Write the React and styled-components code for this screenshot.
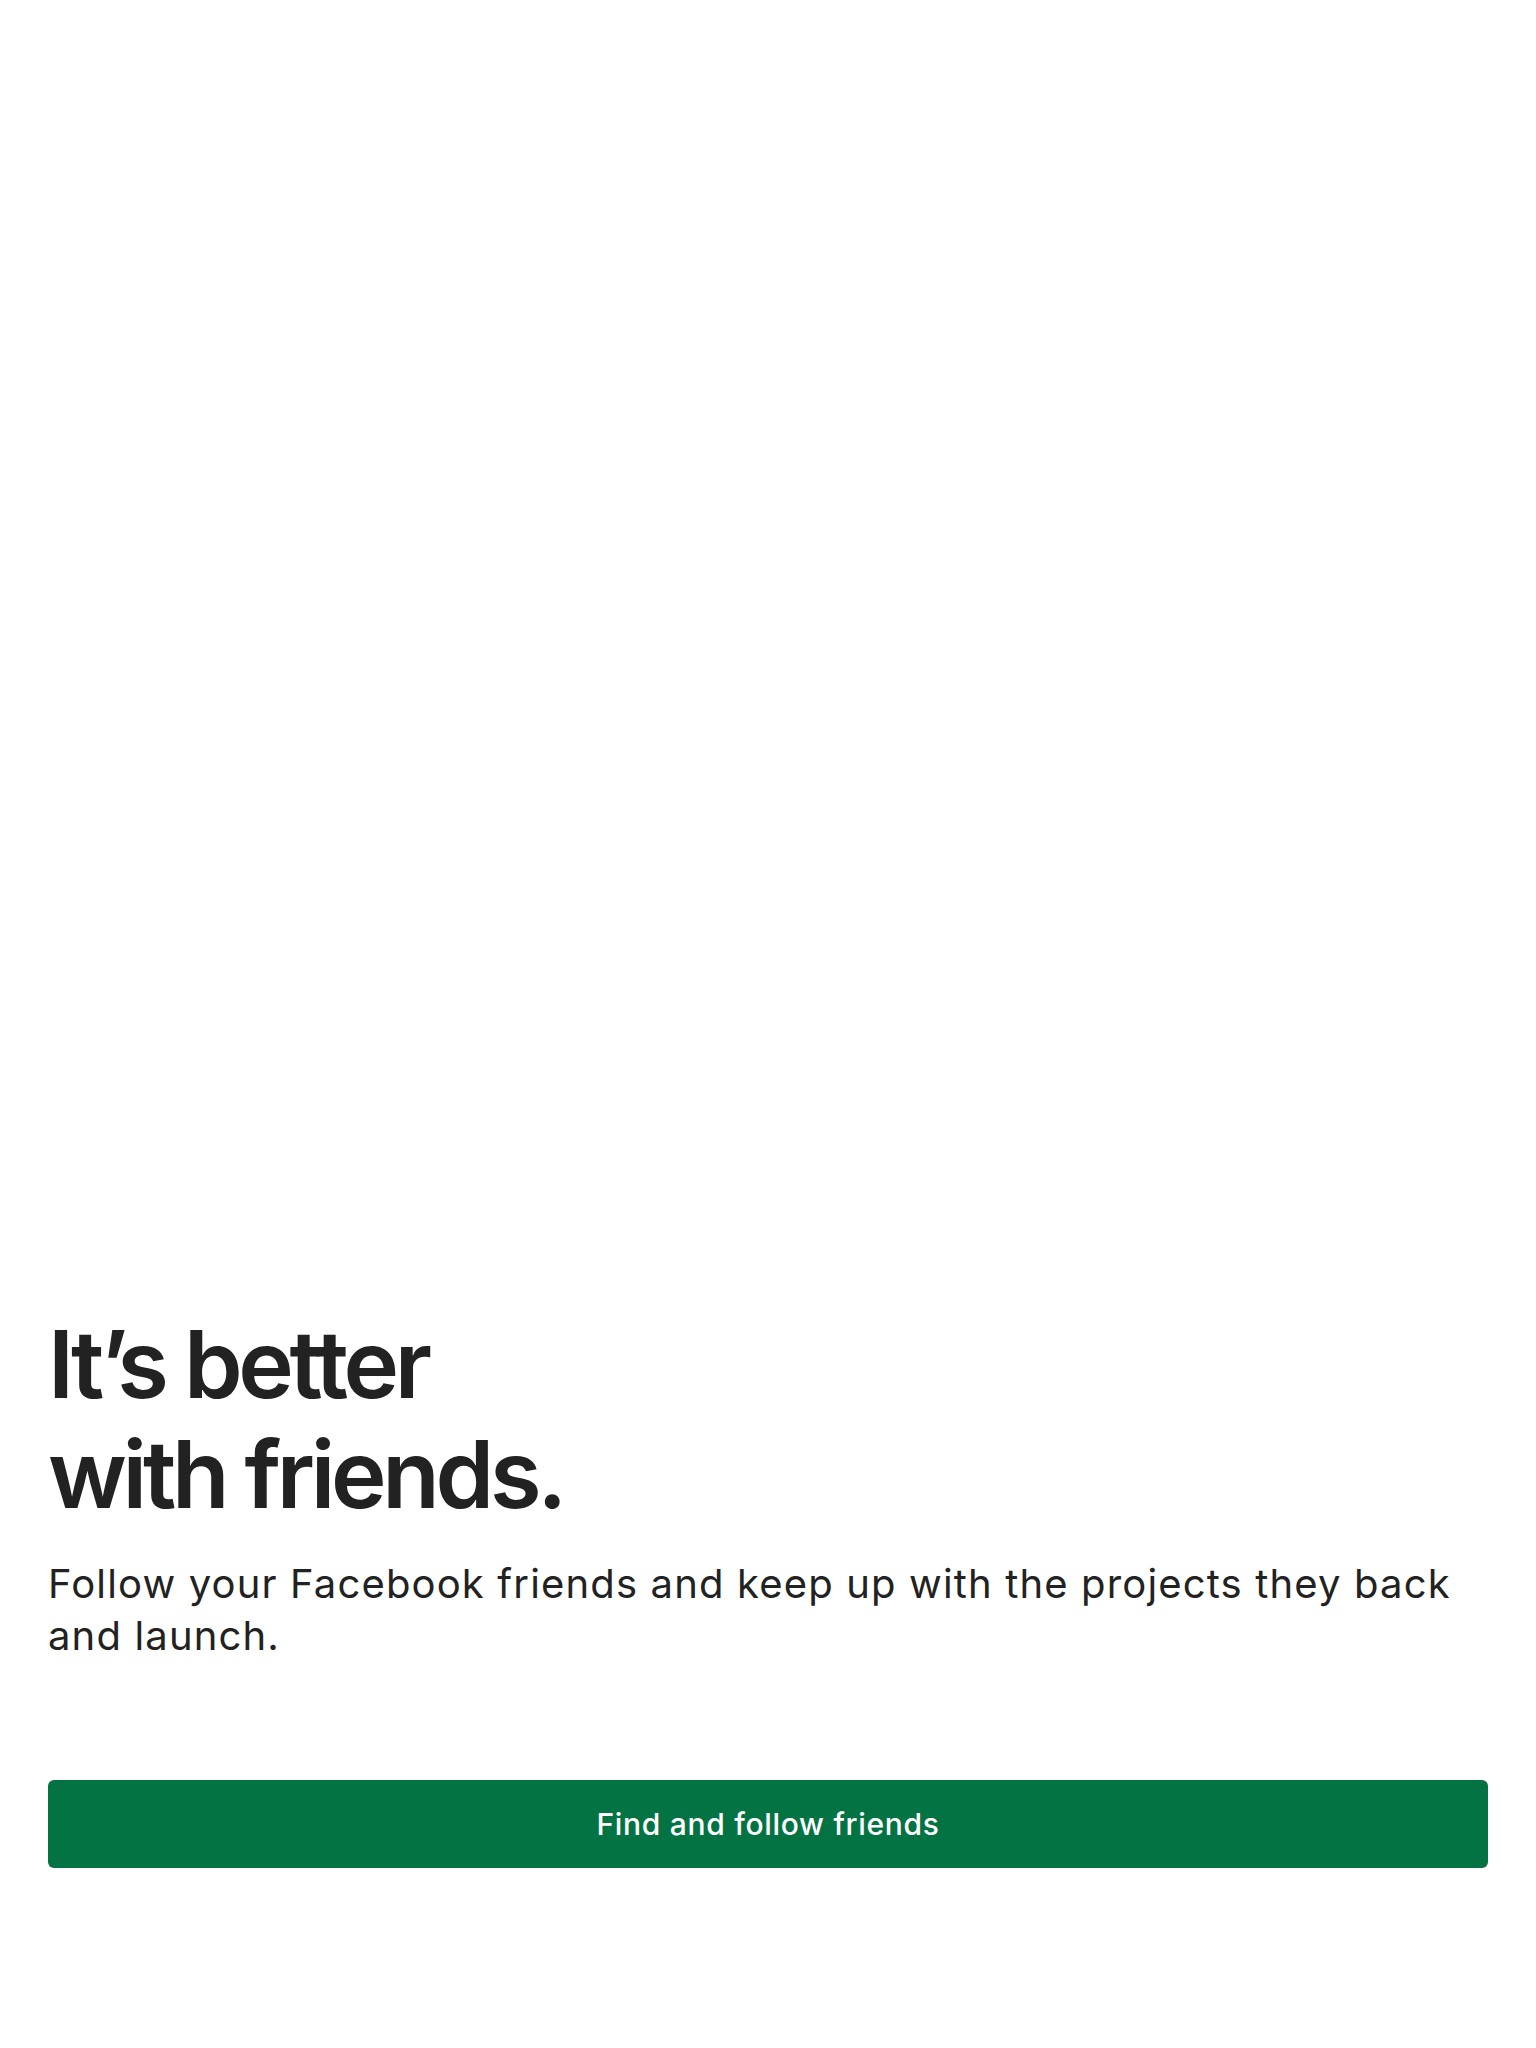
import React from 'react'
import styled, { createGlobalStyle } from 'styled-components'

const GlobalStyle = createGlobalStyle`
  html, body {
    margin: 0;
    padding: 0;
    background: #ffffff;
  }
  body {
    font-family: Inter, "Noto Sans", "Liberation Sans", sans-serif;
    color: #222222;
  }
`

const Page = styled.main`
  min-height: 100vh;
  box-sizing: border-box;
  display: flex;
  flex-direction: column;
  justify-content: flex-end;
  padding: 0 48px 180px;
`

const Heading = styled.h1`
  margin: 0;
  font-size: 94px;
  line-height: 110px;
  font-weight: 600;
  letter-spacing: -4.3px;
  color: #222222;
`

const Lead = styled.p`
  margin: 29px 0 0;
  font-size: 40px;
  line-height: 52px;
  font-weight: 400;
  letter-spacing: 1.15px;
  color: #222222;
`

const PrimaryButton = styled.button`
  margin-top: 118px;
  height: 88px;
  width: 100%;
  border: none;
  border-radius: 6px;
  background: #037343;
  color: #ffffff;
  font-family: inherit;
  font-size: 30px;
  font-weight: 500;
  letter-spacing: 0.7px;
  cursor: pointer;
`

export default function App() {
  return (
    <>
      <GlobalStyle />
      <Page>
        <Heading>
          It’s better
          <br />
          with friends.
        </Heading>
        <Lead>
          Follow your Facebook friends and keep up with the projects they back and launch.
        </Lead>
        <PrimaryButton>Find and follow friends</PrimaryButton>
      </Page>
    </>
  )
}
